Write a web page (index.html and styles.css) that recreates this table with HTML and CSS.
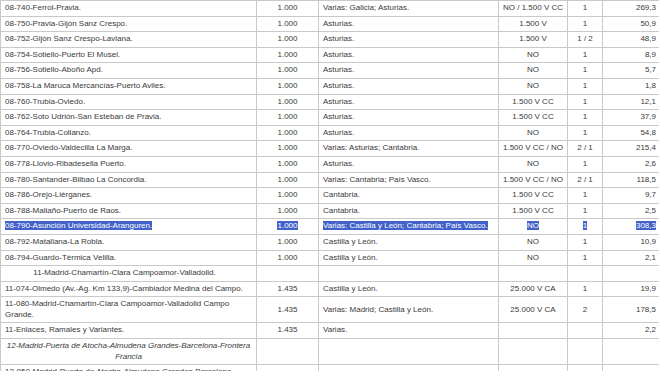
FILE: index.html
```html
<!DOCTYPE html>
<html lang="es">
<head>
<meta charset="utf-8">
<link rel="stylesheet" href="styles.css">
</head>
<body>
<table class="lines">
<colgroup>
<col class="c-name"><col class="c-gauge"><col class="c-region"><col class="c-elec"><col class="c-track"><col class="c-km">
</colgroup>
<tbody>
<tr><td class="name">08-740-Ferrol-Pravia.</td><td class="mid">1.000</td><td>Varias: Galicia; Asturias.</td><td class="mid">NO / 1.500 V CC</td><td class="mid">1</td><td class="num">269,3</td></tr>
<tr><td class="name">08-750-Pravia-Gijón Sanz Crespo.</td><td class="mid">1.000</td><td>Asturias.</td><td class="mid">1.500 V</td><td class="mid">1</td><td class="num">50,9</td></tr>
<tr><td class="name">08-752-Gijón Sanz Crespo-Laviana.</td><td class="mid">1.000</td><td>Asturias.</td><td class="mid">1.500 V</td><td class="mid">1 / 2</td><td class="num">48,9</td></tr>
<tr><td class="name">08-754-Sotiello-Puerto El Musel.</td><td class="mid">1.000</td><td>Asturias.</td><td class="mid">NO</td><td class="mid">1</td><td class="num">8,9</td></tr>
<tr><td class="name">08-756-Sotiello-Aboño Apd.</td><td class="mid">1.000</td><td>Asturias.</td><td class="mid">NO</td><td class="mid">1</td><td class="num">5,7</td></tr>
<tr><td class="name">08-758-La Maruca Mercancías-Puerto Aviles.</td><td class="mid">1.000</td><td>Asturias.</td><td class="mid">NO</td><td class="mid">1</td><td class="num">1,8</td></tr>
<tr><td class="name">08-760-Trubia-Oviedo.</td><td class="mid">1.000</td><td>Asturias.</td><td class="mid">1.500 V CC</td><td class="mid">1</td><td class="num">12,1</td></tr>
<tr><td class="name">08-762-Soto Udrión-San Esteban de Pravia.</td><td class="mid">1.000</td><td>Asturias.</td><td class="mid">1.500 V CC</td><td class="mid">1</td><td class="num">37,9</td></tr>
<tr><td class="name">08-764-Trubia-Collanzo.</td><td class="mid">1.000</td><td>Asturias.</td><td class="mid">NO</td><td class="mid">1</td><td class="num">54,8</td></tr>
<tr><td class="name">08-770-Oviedo-Valdecilla La Marga.</td><td class="mid">1.000</td><td>Varias: Asturias; Cantabria.</td><td class="mid">1.500 V CC / NO</td><td class="mid">2 / 1</td><td class="num">215,4</td></tr>
<tr><td class="name">08-778-Llovio-Ribadesella Puerto.</td><td class="mid">1.000</td><td>Asturias.</td><td class="mid">NO</td><td class="mid">1</td><td class="num">2,6</td></tr>
<tr><td class="name">08-780-Santander-Bilbao La Concordia.</td><td class="mid">1.000</td><td>Varias: Cantabria; País Vasco.</td><td class="mid">1.500 V CC / NO</td><td class="mid">2 / 1</td><td class="num">118,5</td></tr>
<tr><td class="name">08-786-Orejo-Liérganes.</td><td class="mid">1.000</td><td>Cantabria.</td><td class="mid">1.500 V CC</td><td class="mid">1</td><td class="num">9,7</td></tr>
<tr><td class="name">08-788-Maliaño-Puerto de Raos.</td><td class="mid">1.000</td><td>Cantabria.</td><td class="mid">1.500 V CC</td><td class="mid">1</td><td class="num">2,5</td></tr>
<tr class="selected"><td class="name"><span class="sel">08-790-Asunción Universidad-Aranguren.</span></td><td class="mid"><span class="sel">1.000</span></td><td><span class="sel">Varias: Castilla y León; Cantabria; País Vasco.</span></td><td class="mid"><span class="sel">NO</span></td><td class="mid"><span class="sel">1</span></td><td class="num"><span class="sel">308,3</span></td></tr>
<tr><td class="name">08-792-Matallana-La Robla.</td><td class="mid">1.000</td><td>Castilla y León.</td><td class="mid">NO</td><td class="mid">1</td><td class="num">10,9</td></tr>
<tr><td class="name">08-794-Guardo-Térmica Velilla.</td><td class="mid">1.000</td><td>Castilla y León.</td><td class="mid">NO</td><td class="mid">1</td><td class="num">2,1</td></tr>
<tr class="group"><td class="name">11-Madrid-Chamartín-Clara Campoamor-Valladolid.</td><td></td><td></td><td></td><td></td><td></td></tr>
<tr><td class="name">11-074-Olmedo (Av.-Ag. Km 133,9)-Cambiador Medina del Campo.</td><td class="mid">1.435</td><td>Castilla y León.</td><td class="mid">25.000 V CA</td><td class="mid">1</td><td class="num">19,9</td></tr>
<tr><td class="name">11-080-Madrid-Chamartín-Clara Campoamor-Valladolid Campo Grande.</td><td class="mid">1.435</td><td>Varias: Madrid; Castilla y León.</td><td class="mid">25.000 V CA</td><td class="mid">2</td><td class="num">178,5</td></tr>
<tr><td class="name">11-Enlaces, Ramales y Variantes.</td><td class="mid">1.435</td><td>Varias.</td><td class="mid"></td><td class="mid"></td><td class="num">2,2</td></tr>
<tr class="group italic"><td class="name">12-Madrid-Puerta de Atocha-Almudena Grandes-Barcelona-Frontera<br>Francia</td><td></td><td></td><td></td><td></td><td></td></tr>
<tr><td class="name">12-050-Madrid-Puerta de Atocha-Almudena Grandes-Barcelona Sants.</td><td class="mid"></td><td>Varias: Madrid; Castilla-La Mancha; Aragón.</td><td class="mid"></td><td class="mid"></td><td class="num"></td></tr>
</tbody>
</table>
</body>
</html>
```

FILE: styles.css
```css
html, body {
  margin: 0;
  padding: 0;
  background: #ffffff;
}

body {
  font-family: "Liberation Sans", Arial, sans-serif;
  font-size: 8px;
  color: #3a3a3a;
}

.lines {
  border-collapse: collapse;
  table-layout: fixed;
  width: 660px;
}

.c-name { width: 256px; }
.c-gauge { width: 62px; }
.c-region { width: 180px; }
.c-elec { width: 69px; }
.c-track { width: 35px; }
.c-km { width: 58px; }

.lines td {
  border: 1px solid #c9c9c9;
  padding: 2px 4px;
  line-height: 10.6px;
  vertical-align: middle;
  white-space: nowrap;
  overflow: hidden;
}

.lines td.name {
  white-space: normal;
}

.lines td.mid {
  padding: 2px 1px;
  text-align: center;
}

.lines td.num {
  text-align: right;
}

.group td.name {
  padding-right: 12px;
  text-align: center;
  white-space: nowrap;
}

.italic td.name {
  padding-right: 4px;
  font-style: italic;
}

.sel {
  background: #4262c9;
  color: #ffffff;
}
```
